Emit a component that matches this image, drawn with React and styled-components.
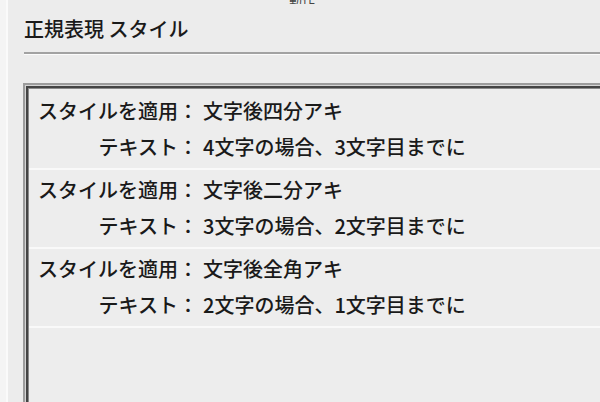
import React from 'react'
import styled, { createGlobalStyle } from 'styled-components'

const GlobalStyle = createGlobalStyle`
  html, body {
    margin: 0;
    padding: 0;
    background: #ececec;
    overflow: hidden;
  }
  body {
    font-family: "Noto Sans CJK JP", "Noto Sans", sans-serif;
    color: #1a1a1a;
  }
`

const rules = [
  { style: '文字後四分アキ', text: '4文字の場合、3文字目までに' },
  { style: '文字後二分アキ', text: '3文字の場合、2文字目までに' },
  { style: '文字後全角アキ', text: '2文字の場合、1文字目までに' },
]

const App = () => {
  return (
    <>
      <GlobalStyle />
      <Window>
        <EdgeStrip />
        <Main>
          <TopCaption>動作</TopCaption>
          <Title>正規表現 スタイル</Title>
          <Rule />
          <ListBox>
            {rules.map((r) => (
              <Entry key={r.style}>
                <Label>スタイルを適用</Label>
                <Colon>：</Colon>
                <Value>{r.style}</Value>
                <Label>テキスト</Label>
                <Colon>：</Colon>
                <Value>{r.text}</Value>
              </Entry>
            ))}
          </ListBox>
        </Main>
      </Window>
    </>
  )
}

export default App

const Window = styled.div`
  display: flex;
  width: 600px;
  height: 402px;
  overflow: hidden;
`

const EdgeStrip = styled.div`
  width: 6px;
  flex: none;
  background: #f4f4f4;
  border-right: 2px solid #fafafa;
`

const Main = styled.div`
  flex: 1;
  display: flex;
  flex-direction: column;
  padding-left: 16px;
  min-width: 0;
`

const TopCaption = styled.div`
  height: 4px;
  overflow: hidden;
  padding-left: 265px;
  font-size: 13px;
  line-height: 0;
  color: #444;
`

const Title = styled.div`
  margin-top: 13px;
  font-size: 20px;
  font-weight: 500;
  line-height: 24px;
  color: #1a1a1a;
`

const Rule = styled.div`
  margin-top: 11px;
  height: 2px;
  background: #a2a2a2;
  border-bottom: 1px solid #fbfbfb;
`

const ListBox = styled.div`
  margin-top: 28px;
  margin-left: -1px;
  height: 340px;
  border-top: 2px solid #9c9c9c;
  border-left: 2px solid #9c9c9c;
  box-shadow: inset 1px 1px 0 0 #d4d4d4, inset 3px 3px 0 0 #444, inset 4px 4px 0 0 #8a8a8a;
  background: #ededed;
  padding: 6px 0 0 4px;
`

const Entry = styled.div`
  display: grid;
  grid-template-columns: 149px 20px 1fr;
  padding: 2px 0 3px;
  border-bottom: 2px solid #f9f9f9;
  font-size: 20px;
  font-weight: 500;
  line-height: 36px;
  white-space: nowrap;
`

const Label = styled.div`
  text-align: right;
`

const Colon = styled.div`
  text-align: center;
`

const Value = styled.div`
  padding-left: 5px;
`
